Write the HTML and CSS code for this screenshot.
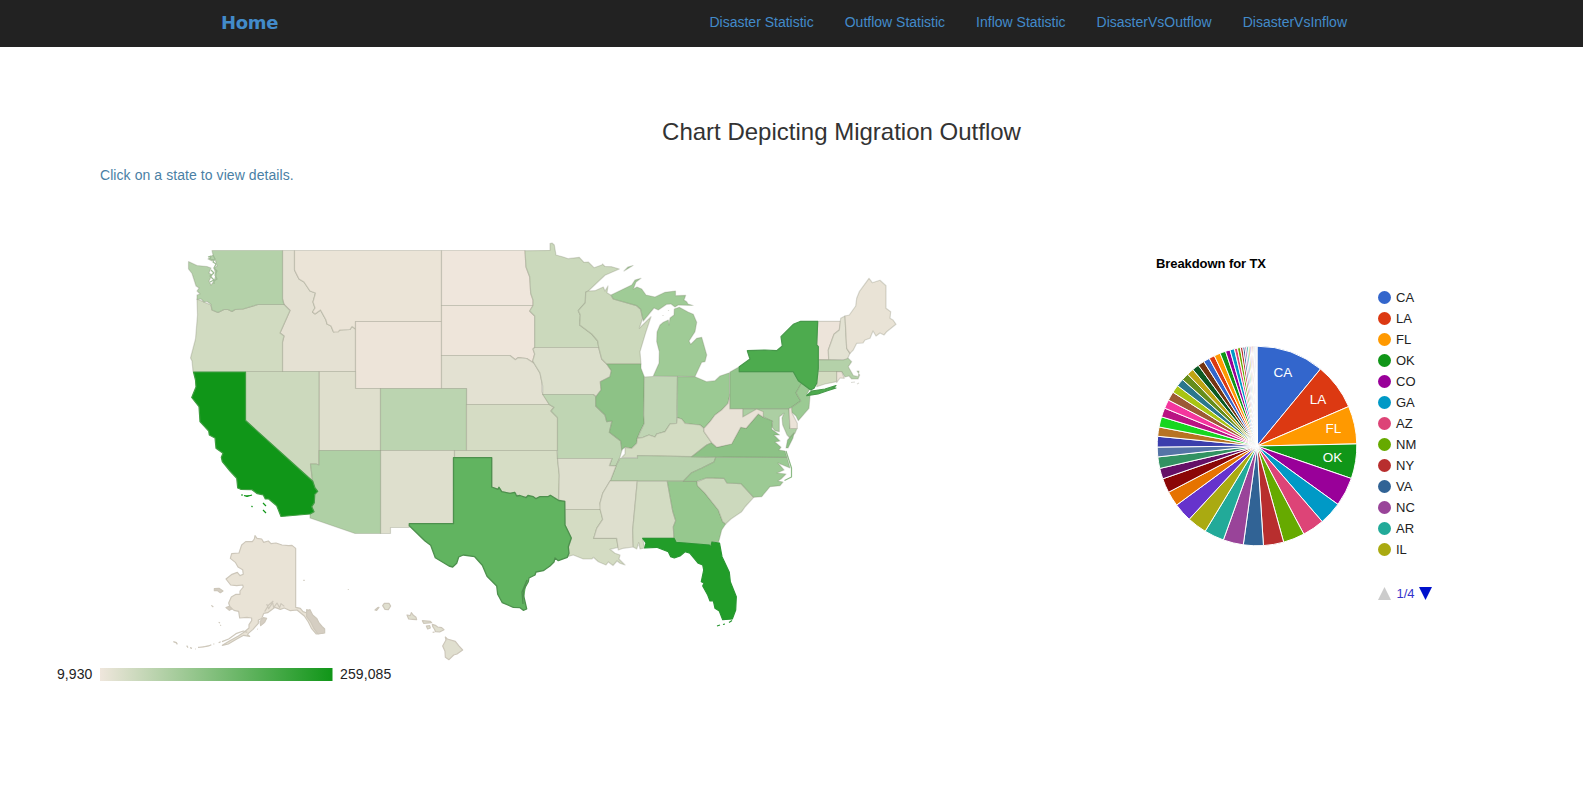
FILE: index.html
```html
<!DOCTYPE html>
<html lang="en">
<head>
<meta charset="utf-8">
<title>Migration Outflow</title>
<link rel="stylesheet" href="styles.css">
</head>
<body>
<header class="navbar">
  <a class="brand">Home</a>
  <nav class="links">
    <a>Disaster Statistic</a><a>Outflow Statistic</a><a>Inflow Statistic</a><a>DisasterVsOutflow</a><a>DisasterVsInflow</a>
  </nav>
</header>
<main>
  <h3 class="title">Chart Depicting Migration Outflow</h3>
  <p class="hint">Click on a state to view details.</p>
  <section class="charts">
    <svg class="map" viewBox="40 210 900 490" width="900" height="490">
      <defs>
        <linearGradient id="scale"><stop offset="0" stop-color="#efe6dc"/><stop offset="1" stop-color="#109618"/></linearGradient>
      </defs>
      <g class="states">
        <path fill="#e5e1d3" d="M282.5 250.500H294.5V270L299 279 304 282 310 291 315.5 293 313 302 315 308 312.5 312 315 314 320.5 310 326 320 327 324 331 326 333.5 332 340 330 350 329.5 352 326.500 355.500 329V371.500H282.500V342L284 336 280 333 290 310.500 284 304.500 282.500 299Z"/>
        <path fill="#ebe4d7" d="M294.5 250.500H441.500V321.500H355.500V329L352 326.500 350 329.500 340 330 338 332 333.500 332 331 326 327 324 326 320 320.500 310 315 314 312.500 312 315 308 313 302 315.500 293 310 291 304 282 299 279 294.500 270Z"/>
        <path fill="#ede4d9" d="M355.500 321.500H441.500V388.500H355.500Z"/>
        <path fill="#efe6dc" d="M441.500 250.500H525L526 267 529.700 276.700 530.700 293.300 533 300V305.500H441.500Z"/>
        <path fill="#eee5da" d="M441.500 305.500H533L529.700 311 534.700 316V347.500L533 349 534.700 354 532.700 361 534 363.300 526.700 358.500 518 357.700 515.300 359.700 510 355.500H441.500Z"/>
        <path fill="#e3e1d2" d="M441.500 355.500H510L515.300 359.700 518 357.700 526.700 358.500 534 363.300 540 373 542 383 542 392 549.300 404.500H466.500V388.500H441.500Z"/>
        <path fill="#dfdfcd" d="M319 371.500H355.500V388.500H380.500V450.500H319Z"/>
        <path fill="#bbd4b0" d="M380.500 388.500H466.500V450.500H380.500Z"/>
        <path fill="#d5dcc4" d="M466.500 404.500H549.300L554 407.300 551 411 557.500 417.700V450.500H466.500Z"/>
        <path fill="#dedfcd" d="M380.500 450.500H454.500V457.700H453.500V523.700H409.300V527.500H390.500V533.500H380.500Z"/>
        <path fill="#d6ddc5" d="M454.500 450.500H557L557.500 458.500 559.300 475 558.700 500 550.300 495.300 548 496.700H540L536 498.700 533.300 496.700H526L520 498 514.700 492.300 510 493.300 501.700 491.700 499 487.300 498 489.300 491.700 487V457.700H454.500Z"/>
        <path fill="#ccd9bd" d="M245.500 371.500H319V465L316 464 310.500 464 312.700 481.300 245.500 420.500Z"/>
        <path fill="#d1dbc1" d="M197 299L204 302 211 305 212 310 218 312.500 224 309.500 228 309.500 232 311.500 235 309.500 243 309 258 304.500H284L290 310.500 280 333 284 336 282.500 342V371.500H193L192 361 190.500 358 195.500 339 197.500 315Z"/>
        <path fill="#b4d1a9" d="M212 250.500H282.500V299L284 304.500H258L243 309 235 309.500 232 311.500 228 309.500 224 309.500 218 312.500 212 310 211 304.500 207 301.500 204 302 201 299 197 299.500 197 295 200 294 197 291 199 288 196 286 192 273.500 188.500 269 188.500 261.500 197 265.500 207 266.500 211 268 209 273 212 275 209 281 211 285 214 281 216 275 214 268 217 266 215 259 212 261 208 259 213 255Z"/>
        <path class="sound" fill="none" d="M213 255l2 4-2 3 3 2-2 4 3 3-2 4 2 4-3 2 0 3M211 270l3 3-4 3 4 4-4 2M208 257l3-1-1 3 4 1"/>
        <path fill="#afd0a5" d="M319 450.500H380.500V533.500H355L310 518V514L314 511.700 311.700 506.700 314.300 502.700 314.700 494.300 317.700 491.300 315 488 312.700 481.300 310.500 464 316 464 319 465Z"/>
        <path fill="#109618" stroke="#3e9d40" d="M193.500 372H245.500V420.500L312.700 481.300 315 488 317.700 491.300 314.700 494.300 314.300 502.700 311.700 506.700 314 511.700 310 514 281 516.500 276.700 505.700 268.700 499 265.300 499 263.300 495 257.300 493.700 252 489.700 240.700 489.300 237.700 488 236.700 478.300 230 471 222.300 461.700 221.300 457.300 223 453.300 216 448.300 215 438 209.300 435 208.700 431 200 421.700 199 406.700 191.700 397.500 196 387 195.500 380Z"/>
        <path fill="#109618" stroke="#109618" d="M241 495l2 0M244 495.500l3 1 5-1.500M251.500 506l1 1M263 503l3 3M263 510l3 3"/>
        <path fill="#cbd9bc" d="M525 250.700L550 250.300V243.500L552 243 554.300 245 556 255 563.300 257 568.300 258.700 579.300 257.300 584 262.300 588.300 262 594 267.700 601.700 265 602.500 264 605 266.500 611.700 266.700 619.300 269 605 275.300 588.300 291 585.700 292.300 585.300 302.700 578.300 310.700 580.300 315 579.700 325 591.700 334 597.700 341 598.700 347.500H534.700V316L529.700 311 533 305.500V300L530.700 293.300 529.700 276.700 526 267Z"/>
        <path fill="#dcdfcc" d="M534.700 347.500H598.700L601.700 359 606.700 364 611.300 370.700 610 376.700 600.300 381.700 601 390 596 396.700 593.300 394.500H542.700V386L540 373 532.700 361 534.700 354 533 349Z"/>
        <path fill="#ccd9bc" d="M588.300 291L595 290.700 603.300 287 605 291 608 286 607 292.700 610.700 295 613.300 299 636.700 305.700 640.700 309.300 642.700 318.300 639.300 328.300 651 316.700 646 331.700 640 351.700 641 364H606.700L601.700 359 598.700 347.500 597.700 341 591.700 334 579.700 325 580.300 315 578.300 310.700 585.300 302.700 585.700 292.300Z"/>
        <path fill="#9fcb96" d="M611 295L631.700 285 635 280 641 278.300 636 282 633.300 289 637 287 641.700 289 646 295 655 297 665 292.300 675.500 291V295.700L685.700 295.300 684 300 686.700 301.700 688 304 693 305.500 678.300 305 675 307 671 304 666.700 304.300 658.300 310 654 308 643.300 321 640.700 309.300 636.700 305.700 613.300 299ZM624 271L628 267 633 265.500Z"/>
        <path fill="#9fcb96" d="M653.300 376L659 363.300 659.300 351.700 656.700 341.700 657 332 660 325 663.300 322.300 668.300 320 669 325 670 318 674 315 674.300 309 679.300 307.300 688 312 693.300 314.300 696.700 322.300 695 331.700 689 341 690.700 344.300 696.700 338.300 701.700 337.300 706.700 355 705 361.700 701.700 362.300 695 376.500ZM663 315v1M668.500 310v1"/>
        <path fill="#bfd5b3" d="M542.700 394.500H593.300L596 396.700 595.700 406 605 415 606.700 421.700 612 421 609.300 432.300 620.700 441 622 450 620 457 616 466 609.300 465.700 612 458.500H557.500V417.700L551 411 554 407.300 549.300 404.500Z"/>
        <path fill="#8dc286" d="M606.700 364H641V368.300L644.300 376.700 643.700 415 644.300 423.300 640 431.700 637.300 438.300 636.700 443.300 631.700 448.300 625 447.300 621.700 450 620.700 441 609.300 432.300 612 421 606.700 421.700 605 415 595.700 406V397L601 390 600.300 381.700 610 376.700 611.300 370.700Z"/>
        <path fill="#c0d5b4" d="M644.300 377L653 376.500H677.500L676.700 423.300 670 424 665 431.700 656.700 434 655 437 649 435 643.300 437.300 637.300 438.300 644.300 423.300 643.700 415Z"/>
        <path fill="#9bca93" d="M677.500 376.700H695L706.700 381.700 715 380.700 720 376 729.500 372.700V397L728 403.300 721.700 410 715 415 710 421.700 704 428.300 700 425 693 424.500 685 423.300 681.700 419 677.300 417.700Z"/>
        <path fill="#d3dcc2" d="M621.700 457.500H637.500V455.500L691.700 456.700 706.700 445 711.700 442.700 704 431.700 703.300 427.700 700 425 685 423.300 681.700 419 677.300 417.700 676.700 423.300 670 424 665 431.700 656.700 434 655 437 649 435 643.300 437.300 637.300 438.300 636.700 443.300 631.700 448.300 625 447.300 625 454Z"/>
        <path fill="#b8d2ad" d="M620 458.300H637.500V455.500L716 457.300 714 462 702 468 691.700 472.700 683.300 481H610L616 466Z"/>
        <path fill="#dedfce" d="M557.500 458.500H612L609.300 465.700 616 466 610.700 480 602.700 493.300 600 503.300 601 509.500H565V501L558.700 500 559.300 475Z"/>
        <path fill="#d4dcc3" d="M565 509.500H600.500L602.700 519.300 596.700 528.300 593.700 538.300H616.700L618.300 547.300 610 549.300 615 553.300 620 555 619 559 625 565 620 563.300 617 561 613 565.500 608.300 562 606 565 598.300 561.700 593.300 557.300 592 559 583.300 559 573.300 555 567.300 556.700 568.500 547 571.300 538.300 565 525Z"/>
        <path fill="#dedfce" d="M610 481H637.300L632.700 530 633.300 547 623.300 548.300 618.300 550 616.700 538.300H593.700L596.700 528.300 602.700 519.300 600 509 600 503 602.700 493.300Z"/>
        <path fill="#d3dcc3" d="M637.300 481.300H667.300L672.700 511 675.700 520.700 673.300 526.700 674 538.300H642.700L644.700 548 640 549 638.700 542.700 636.700 549 633.300 547 632.700 530Z"/>
        <path fill="#96c88e" d="M667.300 481.300H697L697.300 485 705 493.300 718.300 510 722.700 521.700 725.700 524 721.700 530 718.700 541.700H712L710.700 547.300 709.300 545 676 542.300 674 538.300 673.300 526.700 675.700 520.700 672.700 511Z"/>
        <path fill="#229d29" stroke="#289631" d="M642.700 538.300H674L676 542.300 709.300 545 710.700 547.500 712 542 719.500 543 722 556.700 729.300 572.300 730.300 581.700 736.300 596.700 735.700 610 732.300 619 722.700 619.700 719.300 611 715 608.300 713.300 600.700 710 601 707.700 595 702.700 586 704 583 701.300 581.700 703.700 570 702.700 565 698.300 563.300 690 553.300 685 551.700 680 556 674.300 558 670.700 556.700 668.300 551.700 656.700 547.300 644.700 548 646 543ZM732 620.500l-3 2M725 624l-2 .5M720 625l-3 1"/>
        <path fill="#ccd9bd" d="M697 482L706.700 477.700 724 478.300 727 483 741 483.700 753.700 497.300 745 507 741.700 511.700 731 519 725.700 524 722.700 521.700 718.300 510 705 493.300 697.500 486Z"/>
        <path fill="#9cca94" d="M715.700 457.300H787L790 468 778 463 784 470 777 473 786 474 781 479 778 481 783 482 780 485.700 770 486.700 761.700 496.700 753.700 497.300 741 483.700 727 483 724 478.300 706.700 477.700 697 481.300H683.300L691.700 472.700 702 468 714 462Z"/>
        <path class="banks" fill="none" d="M786 451l5.500 17v9l-7 3.500"/>
        <path fill="#accfa3" d="M742.700 408.700H789L790 428.500H797L795 433.300 790 438 787 435 782.700 425 782 418 784 413.300 779.300 416.700V431.700L775 430.700 771.700 426.700 772.700 421.700 763.300 416.700 756.700 412 742.700 418Z"/>
        <path fill="#8dc286" d="M691.700 456.700L706.700 445 711.700 442.700 716.700 447.300 731.700 443.300 741 426.700 746 428.300 758.300 414 763.300 417.300 772.300 421 771.700 429.300 779.500 435 774 435 780 441 775 442 781 447.300 779 450 785 451 787 457.300ZM786 448L787.500 440 794 433 793 438 788 448Z"/>
        <path fill="#e8e2d6" d="M730 394.300V408.700H742.700V417L756.700 409 763.300 411.700V417.300L758.300 414 746 428.300 740.700 427.300 731.700 444 716.700 447.300 711.700 442.700 704 431.700 704 428.300 710 421.700 715 415 721.700 410 728 403.300Z"/>
        <path fill="#94c68d" d="M730 372L739.300 366.700V371.700H793.300L797.300 378.300 802 383 796 392.700 800.700 401 791.700 407.300 788.300 408.700H730Z"/>
        <path fill="#9bca93" d="M801.700 382.700L810 388.500 807 394 810 396 809 408.300 798.300 420.700 796 416 791 411.500 791.700 407.300 800.700 401 796 392.700Z"/>
        <path fill="#ebe3d8" d="M789 408.700L791.500 408 792 413 797.300 423.300V428.500H790Z"/>
        <path fill="#ede4da" d="M817.700 321.300H840.700L839.300 330 834 334.300 828.300 350 828.700 359.700H818.500V346.700L816.700 345Z"/>
        <path fill="#e3e2d3" d="M840.700 318.300L845 316 846.700 348.300 850 353.300 847.300 359.300 828.700 359.700 828.300 350 834 334.300 839.300 330Z"/>
        <path fill="#e9e3d6" d="M845 316L849.300 315 855.700 306 856.700 298.300 859.300 291.700 869 278.300 872.300 282.700 880 280.300 886 285.700V308.300L890.700 311.700 890 318.300 893 320 896 324.300 886.700 331.700 884 335 880 333 876 336 873 331 870 338.300 865 340 863 343 856.700 343.300 853.300 350 850 353.300 846.700 348.300Z"/>
        <path fill="#b4d1a9" d="M818.300 359.700L843.300 360 848.300 358.300 851.700 361.700 848.300 366.700 853.300 375.500 858.300 376.700 859 371 857 371 859.700 375 858 379 851.700 379 849 376 845 377 841.700 371.700H817.700ZM851 382.500l4-.5M857 384l2-1"/>
        <path fill="#d2dbc0" d="M817.700 371.500H836.700V381.700L825 384 816.700 386.700Z"/>
        <path fill="#ebe3d8" d="M836.700 371.700H841.700L844.300 378.300 840 378 836.700 382.500Z"/>
        <path fill="#4dab4e" stroke="#46984a" d="M739.300 371.700V366.700L750 359 747.300 350.700 765 350 776.700 350.700 782.300 346 781 336.700 793.300 324.300 800.700 321.300H817.700L816.700 345 818.300 346.700V368.300L816.700 383.300 814 388.300 810.700 390 798.300 380.700 793.300 371.700ZM806.700 395.700L811.700 391 825 389 836 385.500 833 388 836 388 826.700 391 818 394Z"/>
        <path class="selected" fill="#61b460" d="M453.500 457.700H491.700V487L498 489.300 499 487.300 501.700 491.700 510 493.300 514.700 492.300 516.700 496 520 495.500 526 497.700 528 495.500 533.300 496.700 536 498.700 540 496.700H548L550.300 495.300 558.700 500.500 564.700 501.300 565 525 571.300 538 568.300 546.700 569 553.300 567.300 557.300 558.300 560.700 555 558 554 562 550 566 543.300 570.700 536 572 535 575 529 578 528.300 581.700 523.700 590 523.700 596 526.700 609 523.300 610.300 520 607.700 513.300 607.300 502.300 602.700 497.700 594.300 496.700 586 487 576.300 482.300 565.300 474.700 556.700 463.300 555 458.700 557 456.700 563.300 452.700 567 449 566 435.300 557.700 430.700 545.300 425 541 409.300 525.700V523.700H453.500ZM523 604L522 592 527 580"/>
      </g>
      <!-- Alaska and Hawaii insets, drawn at three times map scale -->
      <g class="insets" transform="translate(160 525) scale(.33333)">
        <path fill="#e9e3d6" d="M285 32l6 8 14 2 6 10 14-4 8 8 15-2 18 6 20 2 10-1 11 9V247l14 3 8 10 12 4-1-10 10 4 8 22 14 8 8 14 9 12v10l-20 3-14-16-10-20-12-18-22-18-20 2-18-8-12 4-16-6-22 16-12 2-6 16-10 4 0 10-16 18-14 12 -2 5 6 4-18-3-22 12-24 14-18 4 20-12 28-16 18-12 14-12 0-10 8-12 0-8-14-2-22 2-3-20-14-3-12-10-4-12 8-18 14-8 12 0 0-10 10-12-2-6-18 2-18-2-14-18 18-14 16-6 8 10 10-4-2-14-14-8-8-14-15-12 4-14 22-2 8-24 12-10 20 0 6-8Z"/>
        <path fill="#d5cec2" d="M440 258l10-4 8 16 12 10 6 12 10 12 8 8v12l-20 3-12-16-10-20-12-16ZM300 290l10-12 10 2-6 12-12 10ZM163 191l14-1 12 8-8 5-10-7-8 1ZM198 248l10-4 8 8-8 4ZM154 241l6 5M176 292l4 2M181 300l2 2M40 350l9 3 3 5M80 362l4 6M90 368l6 2M105 372h2M114 367l16-1 16-3 8-4M160 357h3M176 353l6-3M430 166h4M292 312l2 1"/>
        <path fill="none" d="M320 237l6 14 12-18 3 15 10-14 8 14 4-12 10 8M186 350l20-8 22-16 22-8 12 4M340 228l-14 12-12 20"/>
        <path fill="#e0dfcf" d="M645 255l8-7 4-1-7 9ZM668 242l5-7 14 0 5 8-7 11-10-1ZM741 270l10 2 3-9 6 8 8 6 2 7-12-1-12-1ZM787 287l24 2 4 4-24 2ZM799 303l10-1 2 7-8 3ZM817 298l9 3 7 5 12 2 7 6-13 7-12-1-4-8-5-8ZM818 322l6-1M565 192v2M856 336l6 6 24 7 10 13 12 13-17 12-10 3-14 14-11-7-1-18-7-16 10-18Z"/>
      </g>
      <text x="92.500" y="679" text-anchor="end">9,930</text>
      <rect x="100" y="668" width="232.500" height="13" fill="url(#scale)"/>
      <text x="340" y="679">259,085</text>
    </svg>
    <svg class="pie" viewBox="1140 240 310 370" width="310" height="370">
      <text class="pie-title" x="1156" y="267.500">Breakdown for TX</text>
      <g id="slices"></g>
      <g class="slice-label"><text x="1283" y="376.500">CA</text><text x="1318" y="403.500">LA</text><text x="1333.500" y="432.500">FL</text><text x="1332.500" y="461.500">OK</text></g>
      <g id="legend"></g>
      <path fill="#ccc" d="M1378 600L1384.500 587 1391 600Z"/>
      <text class="page" x="1396.500" y="598">1/4</text>
      <path fill="#0011cc" d="M1419 587H1432L1425.500 600Z"/>
    </svg>
  </section>
</main>
<script src="script.js"></script>
</body>
</html>
```
FILE: styles.css
```css
body { margin: 0; background: #fff; color: #333; font: 14px/20px "Liberation Sans", Arial, sans-serif; }
.navbar { box-sizing: border-box; height: 47px; padding: 0 236px 3px 221px; background: #222; display: flex; align-items: center; justify-content: space-between; }
.navbar a { color: #428bca; }
.brand { font: bold 18px/20px "DejaVu Sans", Verdana, sans-serif; letter-spacing: -.3px; padding-top: 1px; }
.links { display: flex; gap: 31px; }
.title { margin: 72px 0 0 100px; font-size: 24px; line-height: 26px; font-weight: 400; text-align: center; }
.hint { margin: 20px 0 0 100px; color: #4a7fa5; letter-spacing: .07px; }
.charts { display: flex; padding: 25px 0 0 40px; gap: 200px; }
.charts svg { display: block; flex: none; }
.map { font-size: 14px; fill: #222; letter-spacing: .1px; }
.states path { stroke-width: 1.2; stroke-linejoin: round; }
.states path:not([stroke]) { stroke: rgba(115, 120, 95, .26); }
.states .sound:not([stroke]) { stroke: #9dbb93; }
.states .banks:not([stroke]) { stroke: #8dbb86; }
.states path.selected:not([stroke]) { stroke: #4d904d; stroke-width: 1.3; }
.insets path { stroke: #cdc7ba; stroke-width: 3.500; stroke-linejoin: round; }
.pie { margin-top: 30px; font-size: 13px; fill: #222; }
.pie-title { font-weight: bold; fill: #000; letter-spacing: -.08px; }
.slice { stroke: #fff; stroke-width: 1; }
.slice-label { fill: #fff; text-anchor: middle; font-size: 13.500px; }
.page { fill: #3333cc; }
```
FILE: script.js
```js
const NS = "http://www.w3.org/2000/svg";
const palette = ["#3366cc","#dc3912","#ff9900","#109618","#990099","#0099c6","#dd4477","#66aa00","#b82e2e","#316395","#994499","#22aa99","#aaaa11","#6633cc","#e67300","#8b0707","#651067","#329262","#5574a6","#3b3eac","#b77322","#16d620","#b91383","#f4359e","#9c5935","#a9c413","#2a778d","#668d1c","#bea413","#0c5922","#743411"];
// Cumulative end angle of every slice, in degrees clockwise from the top.
const ends = [39.5,66.7,88.8,109,125.8,139.2,152,164.5,176.3,187.9,199.7,211.3,222.8,233.7,242.4,250.8,257,263.7,269.4,275.6,281,287,292.3,297.4,302.6,307.2,311.7,316,320,324,327.8,331.4,334.7,338.3,341.6,344.3,346.9,348.7,350.4,351.8,353,354,355,355.9,356.6,357.2,357.8,358.3,358.8,359.2,359.6,360];
const cx = 1257, cy = 446, r = 99.8;

function add(parent, tag, attrs, text) {
  const el = document.createElementNS(NS, tag);
  for (const k in attrs) el.setAttribute(k, attrs[k]);
  if (text) el.textContent = text;
  parent.appendChild(el);
}
function point(deg) {
  const a = deg * Math.PI / 180;
  return (cx + r * Math.sin(a)).toFixed(2) + " " + (cy - r * Math.cos(a)).toFixed(2);
}
let start = 0;
ends.forEach((end, i) => {
  add(document.getElementById("slices"), "path", {
    class: "slice", fill: palette[i % palette.length],
    d: `M${cx} ${cy}L${point(start)}A${r} ${r} 0 0 1 ${point(end)}Z`
  });
  start = end;
});
["CA","LA","FL","OK","CO","GA","AZ","NM","NY","VA","NC","AR","IL"].forEach((name, i) => {
  const y = 297.5 + i * 21;
  add(document.getElementById("legend"), "circle", { cx: 1384.5, cy: y, r: 6.5, fill: palette[i] });
  add(document.getElementById("legend"), "text", { x: 1396, y: y + 4.5 }, name);
});
```
